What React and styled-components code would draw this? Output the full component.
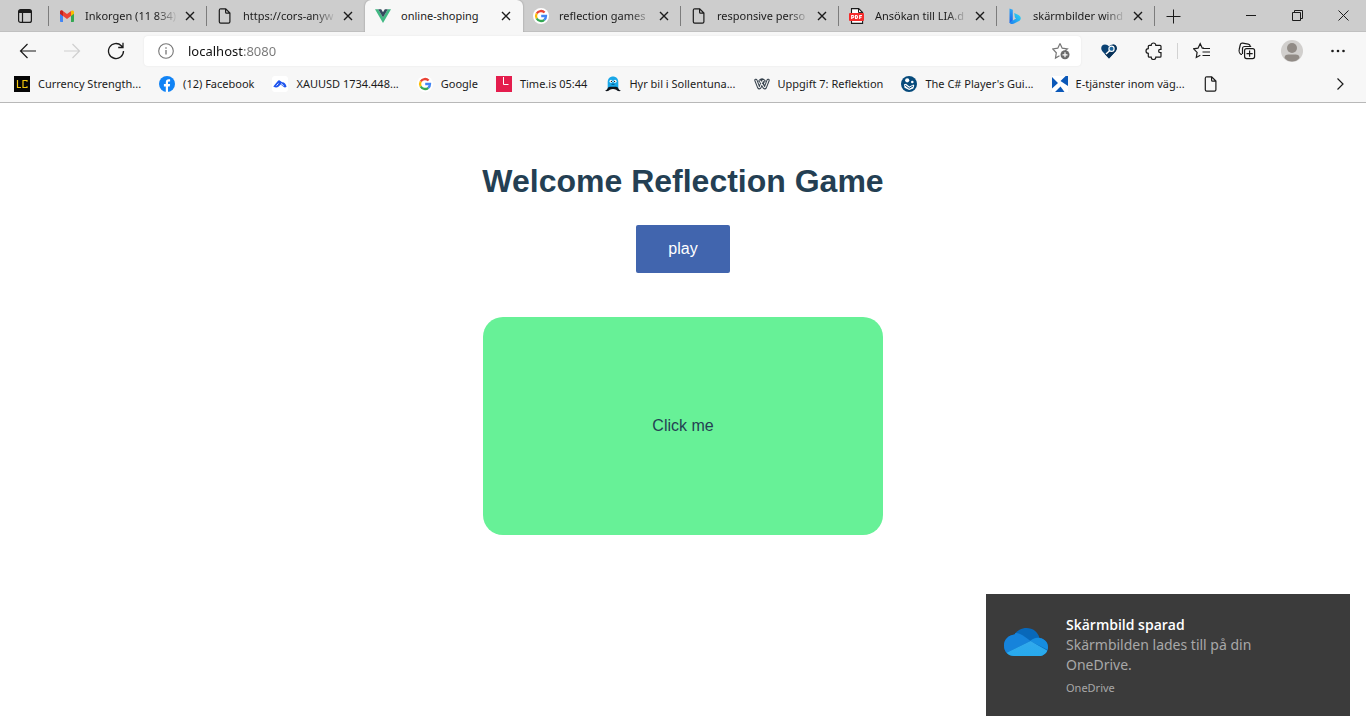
import React from "react";
import styled, { createGlobalStyle, css } from "styled-components";

const GlobalStyle = createGlobalStyle`
  * { box-sizing: border-box; }
  html, body { margin: 0; background: #ffffff; }
  body { font-family: "Liberation Sans", Arial, sans-serif; color: #2c3e50; overflow-x: hidden; }
  button { font: inherit; color: inherit; border: 0; padding: 0; margin: 0; background: none; cursor: pointer; }
  svg { display: block; flex: none; }
`;

/* ---------- browser chrome ---------- */

const Chrome = styled.header`
  font-family: "Noto Sans", "Open Sans", sans-serif;
  font-size: 11px;
  line-height: 16px;
  color: #1b1b1b;
  background: #f7f7f7;
  border-bottom: 1px solid #b8b8b8;
`;

const TabStrip = styled.div`
  display: flex;
  height: 32px;
  background: #cdcdcd;
  box-shadow: inset 0 -1px 0 #c0c0c0;
`;

const TabActions = styled.button`
  width: 49px;
  display: grid;
  place-items: center;
  flex: none;
`;

const Tab = styled.div`
  display: flex;
  align-items: center;
  flex: 0 1 158px;
  min-width: 0;
  padding: 0 9px 0 10px;
  gap: 4px;
  ${(p) =>
    p.$active
      ? css`
          background: #f7f7f7;
          border-radius: 6px 6px 0 0;
          box-shadow: 0 0 2px #8a8a8a;
          clip-path: inset(0 -3px 0 -3px);
        `
      : null}
`;

const Separator = styled.span`
  flex: none;
  width: 1px;
  height: 20px;
  margin: 6px 0 0 -1px;
  background: ${(p) => (p.$hidden ? "transparent" : "#7c7c7c")};
`;

const TabLabel = styled.button`
  display: flex;
  align-items: center;
  gap: 10px;
  flex: 1;
  min-width: 0;
  text-align: left;
`;

const TabTitle = styled.span`
  flex: 1;
  min-width: 0;
  overflow: hidden;
  white-space: nowrap;
  ${(p) =>
    p.$fade
      ? css`
          mask-image: linear-gradient(90deg, #000 calc(100% - 22px), transparent);
        `
      : null}
`;

const CloseTab = styled.button`
  width: 16px;
  height: 16px;
  display: grid;
  place-items: center;
  flex: none;
`;

const NewTab = styled.button`
  width: 36px;
  display: grid;
  place-items: center;
  flex: none;
`;

const WindowControls = styled.div`
  display: flex;
  height: 30px;
  margin-left: auto;
`;

const WindowButton = styled.button`
  width: 46px;
  display: grid;
  place-items: center;
`;

const Toolbar = styled.div`
  display: flex;
  align-items: center;
  height: 38px;
  padding: 0 6px;
`;

const ToolButton = styled.button`
  width: ${(p) => p.$width || 44}px;
  height: 30px;
  display: grid;
  place-items: center;
  flex: none;
`;

const AddressBar = styled.label`
  flex: 1;
  min-width: 0;
  height: 30px;
  display: flex;
  align-items: center;
  gap: 14px;
  margin: 0 6px;
  padding: 0 11px 0 14px;
  border-radius: 4px;
  background: #ffffff;
  box-shadow: 0 0 2px #e2e2e2;
`;

const AddressInput = styled.input`
  flex: 1;
  min-width: 0;
  height: 20px;
  border: 0;
  padding: 0;
  outline: none;
  font: 13px/20px "Noto Sans", "Open Sans", sans-serif;
  color: transparent;
  caret-color: #1b1b1b;
  background: linear-gradient(90deg, #111111 55px, #767676 55px);
  -webkit-background-clip: text;
  background-clip: text;
`;

const Divider = styled.span`
  width: 1px;
  height: 16px;
  background: #d2d2d2;
`;

const Bookmarks = styled.nav`
  display: flex;
  align-items: center;
  height: 32px;
  padding: 0 14px 4px;
  gap: 18px;
`;

const Bookmark = styled.a`
  display: flex;
  align-items: center;
  gap: 8px;
  color: inherit;
  text-decoration: none;
  white-space: nowrap;
`;

const MoreBookmarks = styled.button`
  width: 24px;
  height: 24px;
  display: grid;
  place-items: center;
  margin-left: auto;
`;

/* ---------- page ---------- */

const Page = styled.main`
  display: flex;
  flex-direction: column;
  align-items: center;
  margin-top: 60px;
  text-align: center;
`;

const Title = styled.h1`
  margin: 0 0 26px;
  font-size: 32px;
  line-height: 36px;
  font-weight: 700;
  color: #243f53;
`;

const PlayButton = styled.button`
  padding: 15px 32px;
  font-size: 16px;
  line-height: 18px;
  border-radius: 2px;
  color: #ffffff;
  background: #4165ae;
`;

const GameCard = styled.button`
  width: 400px;
  max-width: 100%;
  margin-top: 44px;
  padding: 100px 16px;
  font-size: 16px;
  line-height: 18px;
  border-radius: 20px;
  color: #243f53;
  background: #67f197;
`;

/* ---------- notification ---------- */

const Toast = styled.aside`
  position: fixed;
  right: 16px;
  bottom: 12px;
  display: flex;
  gap: 18px;
  width: 364px;
  padding: 21px 60px 20px 18px;
  font-family: "Noto Sans", "Open Sans", sans-serif;
  font-size: 14px;
  line-height: 20px;
  color: #a8a8a8;
  background: #3b3b3b;
`;

const ToastIcon = styled.div`
  padding-top: 13px;
`;

const ToastTitle = styled.div`
  font-family: "Open Sans", "Noto Sans", sans-serif;
  font-weight: 600;
  color: #ffffff;
`;

const ToastSource = styled.div`
  margin-top: 5px;
  font-size: 11px;
  line-height: 16px;
`;

/* ---------- icons ---------- */

const Line = ({ size = 16, w = 1, color = "#1b1b1b", children }) => (
  <svg width={size} height={size} viewBox={`0 0 ${size} ${size}`} fill="none" stroke={color} strokeWidth={w}>
    {children}
  </svg>
);

const Pic = ({ size = 16, children }) => (
  <svg width={size} height={size} viewBox="0 0 16 16">{children}</svg>
);

const FileIcon = () => (
  <Line w={1.2}>
    <path d="M3.7.8h5l4.2 4.3v8.6c0 .9-.5 1.4-1.4 1.4H3.7c-.9 0-1.4-.5-1.4-1.4V2.2C2.3 1.3 2.8.8 3.7.8zM8.6.9v3.3c0 .7.4 1 1 1h3.2" />
  </Line>
);

const GmailIcon = () => (
  <Pic>
    <path d="M1 4v9.2c0 .4.3.8.8.8H4V6z" fill="#4285f4" />
    <path d="M12 6v8h2.2c.5 0 .8-.4.8-.8V4z" fill="#34a853" />
    <path d="M1 4c0-1.5 1.6-2.1 2.6-1.3L8 6l4.400-3.300L12 8 8 11 4 8 1 5.700z" fill="#ea4335" />
    <path d="M1 4v1.700L4 8V3.100C2.600 1.900 1 2.500 1 4z" fill="#c5221f" />
    <path d="M12 3.100V8l3-2.300V4c0-1.500-1.600-2.100-3-.9z" fill="#fbbc04" />
  </Pic>
);

const VueIcon = () => (
  <Pic>
    <path d="M0 1.200h3.200L8 9.500l4.800-8.300H16L8 15z" fill="#41b883" />
    <path d="M3.200 1.200h3L8 4.300l1.800-3.100h3L8 9.500z" fill="#35495e" />
  </Pic>
);

const GoogleIcon = () => (
  <Pic>
    <circle cx="8" cy="8" r="8" fill="#fff" />
    <g fill="none" strokeWidth="2.300">
      <path d="M3.700 5.500A5 5 0 0 1 11.600 4.500" stroke="#ea4335" />
      <path d="M3.700 10.500A5 5 0 0 1 3.700 5.500" stroke="#fbbc05" />
      <path d="M11.300 11.800A5 5 0 0 1 3.700 10.500" stroke="#34a853" />
      <path d="M8.200 8H13A5 5 0 0 1 11.300 11.800" stroke="#4285f4" />
    </g>
  </Pic>
);

const PdfIcon = () => (
  <Pic>
    <path d="M2.500.6h7.200l3.900 3.900v10.900H2.500z" fill="#fff" stroke="#1b1b1b" strokeWidth="1.100" />
    <path d="M9.500.6v4h4" fill="none" stroke="#1b1b1b" />
    <rect x="0" y="5" width="15" height="8" rx="1" fill="#f52c2c" />
    <g fill="none" stroke="#fff" strokeWidth="1.100">
      <path d="M2.700 11v-3.500h1.200q1 0 1 1.100t-1 1.100H2.700M6.600 7.500h.7q1.300 0 1.300 1.500t-1.300 1.500h-.7zM10.700 11v-3.500h2.300M10.700 9.300h1.900" />
    </g>
  </Pic>
);

const BingIcon = () => (
  <Pic>
    <defs>
      <linearGradient id="bing-a" x1="0" y1="0" x2="0" y2="1">
        <stop offset="0" stopColor="#2ea8f5" />
        <stop offset="1" stopColor="#1a5fe8" />
      </linearGradient>
      <linearGradient id="bing-b" x1="0" y1="1" x2="1" y2="0">
        <stop offset="0" stopColor="#1b7df0" />
        <stop offset="1" stopColor="#2fdcf2" />
      </linearGradient>
    </defs>
    <path d="M2.500.5l3.300 1.200v11.500L2.500 15z" fill="url(#bing-a)" />
    <path d="M7.200 5l4.300 2c2.900 1.400 2.900 4.500.6 6L6.600 15.800C5 16.200 3 15.700 2.500 14.400l6.600-3.900-1.200-1z" fill="url(#bing-b)" />
  </Pic>
);

const CloseIcon = () => (
  <Line size={10} w={1.400}>
    <path d="M1 1l8 8M9 1L1 9" />
  </Line>
);

const LcIcon = () => (
  <Pic>
    <path fill="#050505" d="M0 0h16v16H0z" />
    <path d="M3.500 4v7.500H7M13 5.800V4.500H9v7h4v-1.300" fill="none" stroke="#f3c70d" strokeWidth="1.200" />
  </Pic>
);

const FacebookIcon = () => (
  <Pic>
    <circle cx="8" cy="8" r="8" fill="#1183f5" />
    <path d="M6.800 15.900v-5.500H4.900V8.100h1.900V6.500c0-2.100 1.100-3.200 3-3.200.7 0 1.300.1 1.300.1v2h-1c-.9 0-1.100.5-1.100 1.200v1.500h2.100l-.4 2.300H9v5.500z" fill="#fff" />
  </Pic>
);

const TradeIcon = () => (
  <Pic>
    <rect width="16" height="16" rx="3" fill="#fff" />
    <path d="M1.300 10.500L5.600 5.200c.8-1 1.800-1.100 2.800-.3l1.700 1.300c1.900-.3 3.300.9 4.500 4.300-1 1.200-2 1.200-3.100.3L8.600 8.400l-1.900 2c-1.400 1.400-3.400 1.500-5.400.1z" fill="#1f55ee" />
    <path d="M4.500 9.600l1.900-2.100M9 7.600l2.600 2" stroke="#fff" strokeWidth=".9" />
  </Pic>
);

const TimeIcon = () => (
  <Pic>
    <path fill="#e41d4d" d="M0 0h16v16H0z" />
    <path d="M7.500 1v7.500h5" fill="none" stroke="#fff" />
  </Pic>
);

const GhostIcon = () => (
  <Pic>
    <path d="M2.700 13V5.800C2.700 2.700 5 .5 8 .5s5.300 2.200 5.300 5.300V13z" fill="#19a7e8" />
    <path d="M0 14.800C3.200 13.500 2.200 11 5 10.700h6c2.800.3 1.800 2.800 5 4.100-2 1-3.900.2-4.800-1-1.900-1.200-4.500-1.200-6.400 0-.9 1.200-2.800 2-4.800 1z" fill="#10151c" />
    <circle cx="6" cy="5.300" r="1.500" fill="#fff" />
    <circle cx="10" cy="5.300" r="1.500" fill="#fff" />
    <circle cx="6.400" cy="5.400" r=".6" fill="#111" />
    <circle cx="9.600" cy="5.400" r=".6" fill="#111" />
    <path d="M6.500 8.300h3" stroke="#0b5884" />
  </Pic>
);

const WeeblyIcon = () => (
  <Pic>
    <g fill="none" strokeLinecap="round" strokeLinejoin="round">
      <path d="M1.900 4.300L4.500 11Q5.300 12.800 6.200 11L8 6.500l1.800 4.500q.9 1.800 1.700 0l2.600-6.700M6 5Q8 2.700 10 5" stroke="#36424d" strokeWidth="3.200" />
      <path d="M1.900 4.300L4.500 11Q5.300 12.500 6.200 11L8.200 5.500Q9 3.700 10 5M6 4.800l3.800 6.200q.9 1.500 1.700 0l2.600-6.700" stroke="#f7f7f7" strokeWidth="1.100" />
    </g>
  </Pic>
);

const PlayersGuideIcon = () => (
  <Pic>
    <circle cx="8" cy="8" r="8" fill="#064a7b" />
    <circle cx="6.200" cy="4.300" r="2.100" fill="#fff" />
    <circle cx="11.300" cy="6" r="1.300" fill="#fff" />
    <path d="M3 8.300l2-.6 3.400 2.700 4-2 .9 1.100-1 3L8.200 14 3.500 11.700z" fill="#fff" />
    <path d="M4.200 9.300L8.200 12.300l3.800-2.300" stroke="#064a7b" fill="none" />
  </Pic>
);

const TransportIcon = () => (
  <Pic>
    <path fill="#fff" d="M0 0h16v16H0z" />
    <path d="M0 1l6 6-6 5.500zM8.500 5L13.700 0H16v10zM3 16l5.500-5.500L12.500 16z" fill="#0b58b8" />
  </Pic>
);

const TABS = [
  { title: "Inkorgen (11 834)", icon: GmailIcon, fade: true },
  { title: "https://cors-anyw", icon: FileIcon, fade: true, noSeparator: true },
  { title: "online-shoping", icon: VueIcon, active: true, noSeparator: true },
  { title: "reflection games", icon: GoogleIcon, fade: true },
  { title: "responsive perso", icon: FileIcon, fade: true },
  { title: "Ansökan till LIA.d", icon: PdfIcon, fade: true },
  { title: "skärmbilder wind", icon: BingIcon, fade: true },
];

const BOOKMARKS = [
  ["Currency Strength...", LcIcon],
  ["(12) Facebook", FacebookIcon],
  ["XAUUSD 1734.448...", TradeIcon],
  ["Google", GoogleIcon],
  ["Time.is 05:44", TimeIcon],
  ["Hyr bil i Sollentuna...", GhostIcon],
  ["Uppgift 7: Reflektion", WeeblyIcon],
  ["The C# Player's Gui...", PlayersGuideIcon],
  ["E-tjänster inom väg...", TransportIcon],
];

function Tabs() {
  return (
    <TabStrip>
      <TabActions aria-label="Tab actions">
        <Line w={1.200}>
          <rect x="1.600" y="1.600" width="12.800" height="12.800" rx="2" />
          <path d="M2 3.500h12" strokeWidth="3" />
          <path d="M5.500 4v10" />
        </Line>
      </TabActions>
      <Separator />
      {TABS.map(({ title, icon: Icon, fade, active, noSeparator }) => (
        <React.Fragment key={title}>
          <Tab $active={active}>
            <TabLabel>
              <Icon />
              <TabTitle $fade={fade}>{title}</TabTitle>
            </TabLabel>
            <CloseTab aria-label="Close tab">
              <CloseIcon />
            </CloseTab>
          </Tab>
          <Separator $hidden={noSeparator} />
        </React.Fragment>
      ))}
      <NewTab aria-label="New tab">
        <Line size={15} w={1}>
          <path d="M7.500.5v14M.5 7.500h14" />
        </Line>
      </NewTab>
      <WindowControls>
        <WindowButton aria-label="Minimize">
          <Line size={11}><path d="M0 5.500h10" /></Line>
        </WindowButton>
        <WindowButton aria-label="Restore">
          <Line size={11}><path d="M.5 2.500h8v8h-8zM2.500 2.500v-2h8v8h-2" /></Line>
        </WindowButton>
        <WindowButton aria-label="Close">
          <Line size={11}><path d="M.5.5l10 10M10.500.5l-10 10" /></Line>
        </WindowButton>
      </WindowControls>
    </TabStrip>
  );
}

function Navigation() {
  return (
    <Toolbar>
      <ToolButton aria-label="Back">
        <Line size={18} w={1.200}><path d="M17 9H1.500M8.500 2l-7 7 7 7" /></Line>
      </ToolButton>
      <ToolButton aria-label="Forward">
        <Line size={18} w={1.200} color="#cfcfcf"><path d="M1 9h15.500M9.500 2l7 7-7 7" /></Line>
      </ToolButton>
      <ToolButton aria-label="Reload">
        <Line size={18} w={1.300}><path d="M16.500 9a7.500 7.500 0 1 1-2.200-5.300L15.800 5.200M16 .8v4.700h-4.800" /></Line>
      </ToolButton>
      <AddressBar>
        <Line color="#767676" w={1.100}>
          <circle cx="8" cy="8" r="7.300" />
          <path d="M8 7v4.500M8 4.200v1.500" strokeWidth="1.300" />
        </Line>
        <AddressInput aria-label="Address" defaultValue="localhost:8080" spellCheck={false} />
        <Line size={18} color="#767676" w={1.200}>
          <path d="M8 1.500l2.200 4.700 5.200.7-2.400 2M7.500 13.700l-4 2.400.8-5.300L.7 6.900l5.100-.7L8 1.500" />
          <circle cx="13" cy="12.800" r="4.500" fill="#6b6b6b" stroke="none" />
          <path d="M13 10.300v5M10.500 12.800h5" stroke="#fff" />
        </Line>
      </AddressBar>
      <ToolButton aria-label="Shopping extension">
        <Pic>
          <path d="M8 15.500L1.300 8.200C-1 5.300.6 1.500 4 1.500c1.800 0 3 .8 4 2 1-1.200 2.200-2 4-2 3.400 0 5 3.800 2.700 6.700z" fill="#0b4274" />
          <path d="M8 15.500l6.700-7.300C17 5.300 15.400 1.500 12 1.500l-8 9.700z" fill="#083259" />
          <circle cx="10.500" cy="5.800" r="2.600" fill="#1b659d" stroke="#fff" strokeWidth="1.200" />
          <path d="M8.500 7.800L5 11" stroke="#fff" strokeWidth="1.500" />
        </Pic>
      </ToolButton>
      <ToolButton $width={46} aria-label="Extensions">
        <Line size={18} w={1.200}>
          <path d="M6.200 3.300a2.300 2.300 0 1 1 4.600 0H15c.6 0 1 .4 1 1v3h-.7a1.700 1.700 0 0 0 0 3.400h.7v3.500c0 .6-.4 1-1 1h-4.200a2.300 2.300 0 0 1-4.600 0H4.300c-.6 0-1-.4-1-1v-2.900a2.300 2.300 0 0 1 0-4.600V4.300c0-.6.4-1 1-1z" />
        </Line>
      </ToolButton>
      <Divider />
      <ToolButton $width={48} aria-label="Favorites">
        <Line size={18} w={1.200}>
          <path d="M11 6.200H9.300L7.200 1.700 5 6.200l-4.400.6 3.500 3.600-.8 5.100 4-2.200M10 6.500h7M9.500 10h7.500M9.500 13.500h7.500" />
        </Line>
      </ToolButton>
      <ToolButton $width={42} aria-label="Collections">
        <Line size={18} w={1.200}>
          <rect x="6.600" y="6.600" width="10" height="10" rx="2" />
          <path d="M11.600 8.500v6.200M8.500 11.600h6.200M4 12.500l-.8-.1C1.500 11.500.8 9 1.200 7.500L2.200 3C2.500 1.700 3.500 1 4.700 1.200l5.500.9c1 .2 1.800.9 2 2M4.500 12V6.500c0-1.200.8-2 2-2h6.700" />
        </Line>
      </ToolButton>
      <ToolButton $width={48} aria-label="Profile">
        <svg width="22" height="22" viewBox="0 0 22 22">
          <clipPath id="avatar"><circle cx="11" cy="11" r="11" /></clipPath>
          <g clipPath="url(#avatar)">
            <path fill="#d1cfcd" d="M0 0h22v22H0z" />
            <circle cx="11" cy="8" r="5" fill="#918b86" />
            <path d="M3.500 18c0-2.500 1.500-3.500 4-3.500h7c2.500 0 4 1 4 3.500-2 2.500-4.500 3.500-7.500 3.500S5.500 20.500 3.500 18z" fill="#918b86" />
          </g>
        </svg>
      </ToolButton>
      <ToolButton aria-label="Settings and more">
        <svg width="16" height="4" viewBox="0 0 16 4" fill="#1b1b1b">
          <circle cx="2.500" cy="2" r="1.300" />
          <circle cx="8" cy="2" r="1.300" />
          <circle cx="13.500" cy="2" r="1.300" />
        </svg>
      </ToolButton>
    </Toolbar>
  );
}

export default function App() {
  return (
    <>
      <GlobalStyle />
      <Chrome>
        <Tabs />
        <Navigation />
        <Bookmarks>
          {BOOKMARKS.map(([label, Icon]) => (
            <Bookmark href="#" key={label}>
              <Icon />
              {label}
            </Bookmark>
          ))}
          <Bookmark href="#" aria-label="Untitled bookmark">
            <FileIcon />
          </Bookmark>
          <MoreBookmarks aria-label="More bookmarks">
            <Line size={12} w={1.200}><path d="M3.500.5L9 6 3.500 11.500" /></Line>
          </MoreBookmarks>
        </Bookmarks>
      </Chrome>
      <Page>
        <Title>Welcome Reflection Game</Title>
        <PlayButton>play</PlayButton>
        <GameCard>Click me</GameCard>
      </Page>
      <Toast role="status">
        <ToastIcon>
          <svg width="44" height="28" viewBox="0 0 44 28">
            <defs>
              <linearGradient id="cloud-front" x1="0" y1="0" x2="0" y2="1">
                <stop offset="0" stopColor="#32a9ec" />
                <stop offset="1" stopColor="#27aaed" />
              </linearGradient>
              <clipPath id="cloud">
                <path d="M10 28C4 28 0 23.500 0 17.500 0 12 4 7 10.500 6.500 13 2.500 17.500 0 22.500 0c6.500 0 11.500 4 13 10 5 .5 8.500 4.500 8.500 9.200 0 5-4 8.800-9 8.800z" />
              </clipPath>
            </defs>
            <g clipPath="url(#cloud)">
              <path fill="#0868ba" d="M0 0h44v28H0z" />
              <path d="M0 5h11c4 0 7 1.500 15.500 8L0 26z" fill="#1683db" />
              <path d="M26 13c3.500-3 6-3.300 9.500-3.300H44V22z" fill="#168de0" />
              <path d="M0 26l26.500-13L44 23v5H0z" fill="url(#cloud-front)" />
            </g>
          </svg>
        </ToastIcon>
        <div>
          <ToastTitle>Skärmbild sparad</ToastTitle>
          <div>Skärmbilden lades till på din OneDrive.</div>
          <ToastSource>OneDrive</ToastSource>
        </div>
      </Toast>
    </>
  );
}
